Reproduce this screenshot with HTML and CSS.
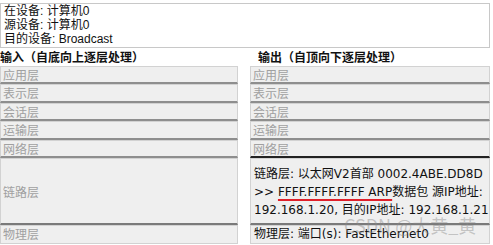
FILE: index.html
```html
<!DOCTYPE html>
<html>
<head>
<meta charset="utf-8">
<link rel="stylesheet" href="styles.css">
</head>
<body>
<div class="page">
  <div class="info">
    <div>在设备: 计算机0</div>
    <div>源设备: 计算机0</div>
    <div>目的设备: Broadcast</div>
  </div>
  <div class="cols">
    <div class="col">
      <div class="head">输入（自底向上逐层处理）</div>
      <div class="row">应用层</div>
      <div class="row r19">表示层</div>
      <div class="row">会话层</div>
      <div class="row r19">运输层</div>
      <div class="row">网络层</div>
      <div class="row link center">链路层</div>
      <div class="row phys">物理层</div>
    </div>
    <div class="col right">
      <div class="head">输出（自顶向下逐层处理）</div>
      <div class="row">应用层</div>
      <div class="row r19">表示层</div>
      <div class="row">会话层</div>
      <div class="row r19">运输层</div>
      <div class="row net">网络层</div>
      <div class="row link active">
        <div>链路层: 以太网V2首部 0002.4ABE.DD8D</div>
        <div>&gt;&gt; <span class="mark">FFFF.FFFF.FFFF ARP</span>数据包 源IP地址:</div>
        <div>192.168.1.20, 目的IP地址: 192.168.1.21</div>
      </div>
      <div class="row phys active">物理层: 端口(s): FastEthernet0</div>
      <div class="watermark">CSDN @大黄_黄</div>
    </div>
  </div>
</div>
</body>
</html>
```
FILE: styles.css
```css
html, body {
  margin: 0;
  padding: 0;
  background: #fff;
}
.page {
  width: 493px;
  height: 245px;
  overflow: hidden;
  font-family: "Liberation Sans", "Noto Sans CJK SC", sans-serif;
  font-size: 12px;
  color: #111;
}
.info {
  box-sizing: border-box;
  margin: 3px 3px 0 0;
  width: 490px;
  height: 45px;
  border: 1px solid #c8c8c8;
  padding: 0 0 0 3px;
  line-height: 14px;
}
.cols {
  display: grid;
  grid-template-columns: 238px 240px;
  column-gap: 12px;
}
.col {
  display: flex;
  flex-direction: column;
  position: relative;
}
.head {
  height: 18px;
  line-height: 18px;
  font-weight: bold;
  font-family: "Noto Sans CJK SC", sans-serif;
  font-size: 12px;
  color: #111;
}
.right .head {
  padding-left: 8px;
}
.row {
  box-sizing: border-box;
  height: 18px;
  background: #efefef;
  border: 1px solid #d2d2d2;
  border-bottom: 2px solid #8e8e8e;
  color: #a0a0a0;
  font-family: "Noto Sans CJK SC", sans-serif;
  font-size: 12px;
  line-height: 15px;
  padding-left: 2px;
}
.row.r19 {
  height: 19px;
}
.row.net {
  border-bottom-color: #222;
}
.row.link {
  height: 67px;
  border-bottom-color: #7a7a7a;
}
.row.center {
  display: flex;
  align-items: center;
}
.row.phys {
  height: 19px;
  border-bottom: 1px solid #d2d2d2;
}
.row.active {
  color: #111;
  font-family: "DejaVu Sans", "Noto Sans CJK SC", sans-serif;
  font-size: 12px;
  padding-left: 3px;
}
.row.link.active {
  padding-top: 6px;
  line-height: 18px;
  white-space: nowrap;
}
.row.phys.active {
  line-height: 16px;
}
.mark {
  text-decoration: underline;
  text-decoration-color: #e0202a;
  text-decoration-thickness: 2px;
  text-underline-offset: 3px;
}
.watermark {
  position: absolute;
  left: 94px;
  top: 165px;
  font-family: "Noto Sans CJK SC", sans-serif;
  font-size: 18px;
  line-height: 24px;
  color: rgba(140, 140, 140, 0.45);
  white-space: nowrap;
  pointer-events: none;
}
```
